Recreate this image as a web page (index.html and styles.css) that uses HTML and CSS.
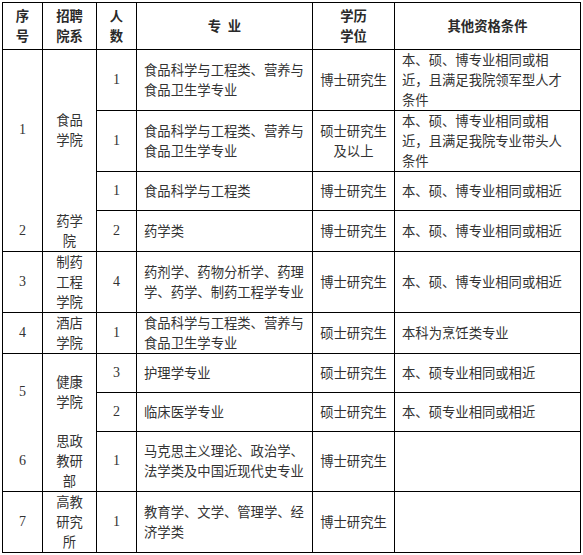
FILE: index.html
```html
<!DOCTYPE html>
<html lang="zh">
<head>
<meta charset="utf-8">
<link rel="stylesheet" href="styles.css">
</head>
<body>
<table class="jobs">
  <colgroup>
    <col class="c-no"><col class="c-dept"><col class="c-num"><col class="c-major"><col class="c-deg"><col class="c-cond">
  </colgroup>
  <thead>
    <tr class="h-head">
      <th>序号</th>
      <th>招聘院系</th>
      <th>人数</th>
      <th>专&ensp;业</th>
      <th>学历<br>学位</th>
      <th>其他资格条件</th>
    </tr>
  </thead>
  <tbody>
    <tr class="h61">
      <td class="num" rowspan="3">1</td>
      <td class="dept" rowspan="3">食品学院</td>
      <td class="num">1</td>
      <td class="left">食品科学与工程类、营养与食品卫生学专业</td>
      <td class="deg">博士研究生</td>
      <td class="left">本、硕、博专业相同或相近，且满足我院领军型人才条件</td>
    </tr>
    <tr class="h61">
      <td class="num">1</td>
      <td class="left">食品科学与工程类、营养与食品卫生学专业</td>
      <td class="deg">硕士研究生及以上</td>
      <td class="left">本、硕、博专业相同或相近，且满足我院专业带头人条件</td>
    </tr>
    <tr class="h39">
      <td class="num">1</td>
      <td class="left">食品科学与工程类</td>
      <td class="deg">博士研究生</td>
      <td class="left">本、硕、博专业相同或相近</td>
    </tr>
    <tr class="h40">
      <td class="num joined">2</td>
      <td class="dept joined">药学院</td>
      <td class="num">2</td>
      <td class="left">药学类</td>
      <td class="deg">博士研究生</td>
      <td class="left">本、硕、博专业相同或相近</td>
    </tr>
    <tr class="h61">
      <td class="num">3</td>
      <td class="dept">制药工程学院</td>
      <td class="num">4</td>
      <td class="left">药剂学、药物分析学、药理学、药学、制药工程学专业</td>
      <td class="deg">博士研究生</td>
      <td class="left">本、硕、博专业相同或相近</td>
    </tr>
    <tr class="h41">
      <td class="num">4</td>
      <td class="dept">酒店学院</td>
      <td class="num">1</td>
      <td class="left">食品科学与工程类、营养与食品卫生学专业</td>
      <td class="deg">硕士研究生</td>
      <td class="left">本科为烹饪类专业</td>
    </tr>
    <tr class="h39">
      <td class="num" rowspan="2">5</td>
      <td class="dept" rowspan="2">健康学院</td>
      <td class="num">3</td>
      <td class="left">护理学专业</td>
      <td class="deg">硕士研究生</td>
      <td class="left">本、硕专业相同或相近</td>
    </tr>
    <tr class="h39">
      <td class="num">2</td>
      <td class="left">临床医学专业</td>
      <td class="deg">硕士研究生</td>
      <td class="left">本、硕专业相同或相近</td>
    </tr>
    <tr class="h60">
      <td class="num joined">6</td>
      <td class="dept joined">思政教研部</td>
      <td class="num">1</td>
      <td class="left">马克思主义理论、政治学、法学类及中国近现代史专业</td>
      <td class="deg">博士研究生</td>
      <td class="left"></td>
    </tr>
    <tr class="h61">
      <td class="num">7</td>
      <td class="dept">高教研究所</td>
      <td class="num">1</td>
      <td class="left">教育学、文学、管理学、经济学类</td>
      <td class="deg">博士研究生</td>
      <td class="left"></td>
    </tr>
  </tbody>
</table>
</body>
</html>
```

FILE: styles.css
```css
html, body {
  margin: 0;
  padding: 0;
  background: #ffffff;
}

body {
  padding: 2px 0 0 2px;
  font-family: "Noto Sans CJK SC", "Noto Sans", sans-serif;
  font-size: 13.33px;
  line-height: 20px;
  color: #333333;
}

.jobs {
  border-collapse: collapse;
  table-layout: fixed;
  width: 578px;
}

.c-no { width: 40px; }
.c-dept { width: 54px; }
.c-num { width: 40px; }
.c-major { width: 176px; }
.c-deg { width: 82px; }
.c-cond { width: 186px; }

.jobs th,
.jobs td {
  border: 1px solid #000000;
  padding: 0 8px;
  vertical-align: middle;
  text-align: center;
}

.jobs th {
  font-weight: bold;
  color: #2a2a2a;
}

.h-head { height: 47px; }
.h39 { height: 39px; }
.h40 { height: 40px; }
.h41 { height: 41px; }
.h60 { height: 60px; }
.h61 { height: 61px; }

.jobs td.num {
  font-family: "Liberation Serif", "Noto Sans CJK SC", serif;
  font-size: 14px;
  padding: 0 4px;
}

.jobs td.dept {
  padding: 0 7px;
}

.jobs td.deg {
  padding: 0 4px;
}

.jobs td.left {
  text-align: left;
  padding: 0 7px;
}

.jobs td.joined {
  border-top-style: hidden;
}
```
